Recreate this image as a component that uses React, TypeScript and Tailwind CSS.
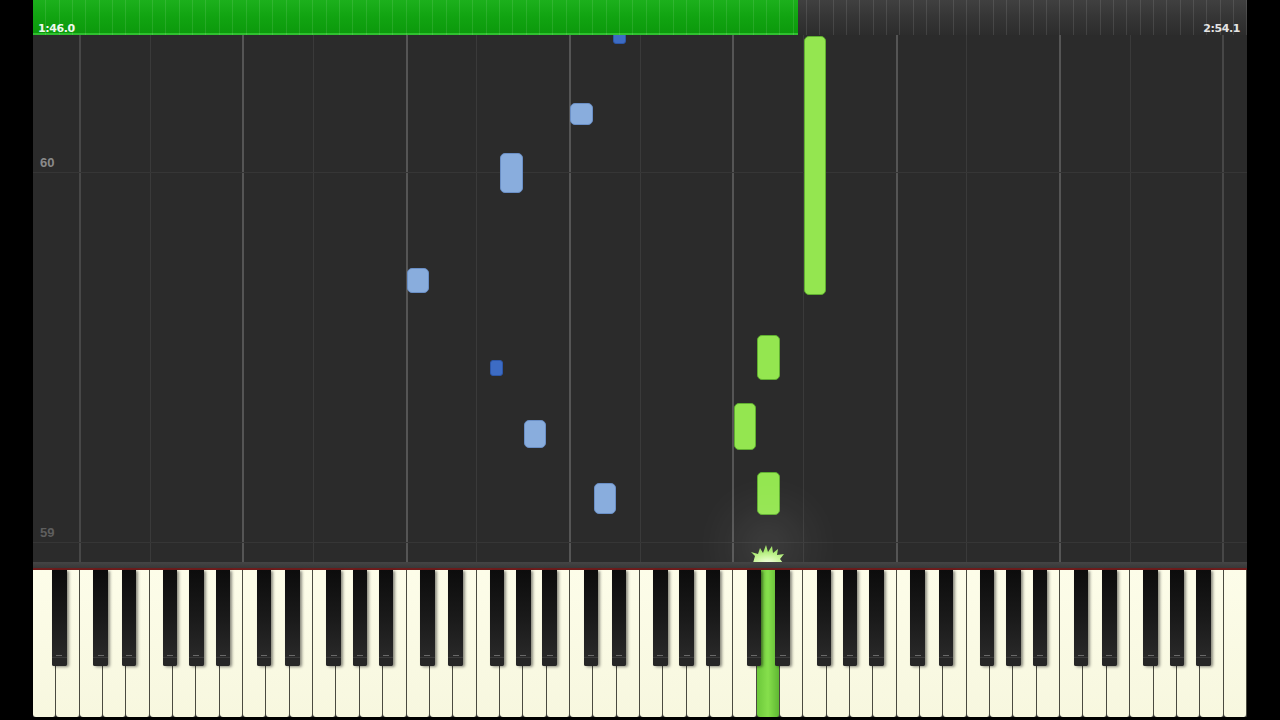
import React from "react";

const W = 1214;
const KW = W / 52;
const LETTERS = "ABCDEFG";
const BLACK_OFFSET: Record<string, number> = { A: 3, C: -2.5, D: 2.5, F: -3, G: 0 };

type Note = { idx: number; top: number; bottom: number; kind: "green" | "blue" };
type BNote = { after: number; top: number; bottom: number };

const notes: Note[] = [
  { idx: 33, top: 36, bottom: 295, kind: "green" },
  { idx: 31, top: 335, bottom: 380, kind: "green" },
  { idx: 30, top: 403, bottom: 450, kind: "green" },
  { idx: 31, top: 472, bottom: 515, kind: "green" },
  { idx: 16, top: 268, bottom: 293, kind: "blue" },
  { idx: 20, top: 153, bottom: 193, kind: "blue" },
  { idx: 23, top: 103, bottom: 125, kind: "blue" },
  { idx: 21, top: 420, bottom: 448, kind: "blue" },
  { idx: 24, top: 483, bottom: 514, kind: "blue" },
];

const blackNotes: BNote[] = [
  { after: 19, top: 360, bottom: 376 },
  { after: 24, top: 30, bottom: 44 },
];

function blackCenter(i: number) {
  const letter = LETTERS[i % 7];
  return (i + 1) * KW + (BLACK_OFFSET[letter] ?? 0);
}

const whiteKeys = Array.from({ length: 52 }, (_, i) => i);
const blackKeys = whiteKeys.filter((i) => i < 51 && LETTERS[i % 7] in BLACK_OFFSET);
const PRESSED = 31;

function columnClass(i: number) {
  const l = LETTERS[i % 7];
  if (l === "C") {
    return i === 2 || i === 51 ? "border-l-2 border-[#474747]" : "border-l-2 border-[#555]";
  }
  if (l === "F") return "border-l border-[#3a3a3a]";
  return "";
}

function ProgressBar() {
  const ticks = Array.from({ length: 91 }, (_, i) => i);
  return (
    <div className="relative h-[35px] w-full overflow-hidden bg-gradient-to-b from-[#404040] via-[#353535] to-[#2c2c2c]">
      <div className="absolute left-0 top-0 h-[35px] w-[765px] border-b-2 border-[#2fc02f] bg-gradient-to-b from-[#1cb01c] via-[#11a411] to-[#0c9a0c]" />
      <div className="absolute inset-0 flex">
        {ticks.map((t) => (
          <div key={t} className="flex-1 border-r border-white/10" />
        ))}
      </div>
      <div className="relative flex h-full items-end justify-between px-[5px] pb-0 text-[11px] font-semibold leading-[13px] text-[#e4e4e4] [font-family:'DejaVu_Sans','Liberation_Sans',sans-serif] tracking-[-0.4px]">
        <span className="text-[#eef8ee]">1:46.0</span>
        <span className="pr-[2px]">2:54.1</span>
      </div>
    </div>
  );
}

function Roll() {
  return (
    <div className="relative h-[527px] w-full overflow-hidden bg-[#2b2b2b]">
      <div className="absolute inset-0 flex">
        {whiteKeys.map((i) => (
          <div key={i} className={`h-full flex-1 ${columnClass(i)}`} />
        ))}
      </div>
      <div className="absolute inset-0 flex flex-col pl-[7px] pt-[118px] text-[13px] font-bold [font-family:'Liberation_Sans',Arial,sans-serif]">
        <div className="h-[19px] text-[#8a8a8a]">60</div>
        <div className="-ml-[7px] h-px bg-[#363636]" />
        <div className="h-[350px]" />
        <div className="h-[19px] text-[#5e5e5e]">59</div>
        <div className="-ml-[7px] h-px bg-[#363636]" />
      </div>

      {notes.map((n, k) => (
        <div
          key={"n" + k}
          className={`absolute rounded-[5px] border ${
            n.kind === "green" ? "border-[#5fae30] bg-[#94e650]" : "border-[#6a8fc6] bg-[#89addd]"
          }`}
          style={{ left: n.idx * KW + 0.5, width: KW - 1, top: n.top - 35, height: n.bottom - n.top }}
        />
      ))}
      {blackNotes.map((n, k) => (
        <div
          key={"b" + k}
          className="absolute rounded-[3px] border border-[#2c56a8] bg-[#3d6cc4]"
          style={{ left: blackCenter(n.after) - 6.5, width: 13, top: n.top - 35, height: n.bottom - n.top }}
        />
      ))}

      <div className="absolute left-[700px] top-[475px] h-[70px] w-[70px] rounded-full bg-white/10 blur-xl" />
      <svg className="absolute left-[715px] top-[506px]" width="40" height="22" viewBox="0 0 40 22">
        <defs>
          <radialGradient id="sg" cx="50%" cy="100%" r="70%">
            <stop offset="0%" stopColor="#f4ffe0" />
            <stop offset="60%" stopColor="#c9f59a" />
            <stop offset="100%" stopColor="#a8e870" />
          </radialGradient>
        </defs>
        <path
          d="M5 22 L7 15 L3 11 L10 13 L12 7 L15 12 L18 4 L20 11 L24 5 L25 12 L30 8 L29 14 L36 13 L32 18 L35 22 Z"
          fill="url(#sg)"
        />
      </svg>
    </div>
  );
}

function Keyboard() {
  return (
    <div className="relative h-[147px] w-full bg-[#2a2a2a]">
      <div className="flex h-full w-full">
        {whiteKeys.map((i) => (
          <div
            key={i}
            className={`h-full flex-1 rounded-b-[3px] border-r border-[#4a4a40] ${
              i === PRESSED
                ? "bg-gradient-to-r from-[#6cc83a] via-[#86df4c] to-[#5fb832]"
                : "bg-gradient-to-b from-[#fdfde9] to-[#f7f7df]"
            }`}
          />
        ))}
      </div>
      {blackKeys.map((i) => (
        <div
          key={"bk" + i}
          className="absolute top-0 flex h-[96px] w-[14.5px] flex-col justify-end rounded-b-[2px] bg-gradient-to-b from-[#0c0c0c] via-[#1a1a1a] to-[#2c2c2c] shadow-[2px_1px_3px_rgba(0,0,0,0.45)]"
          style={{ left: blackCenter(i) - 7.25 }}
        >
          <div className="mx-auto mb-[1px] h-px w-[6px] bg-[#6a6a6a]" />
          <div className="h-[9px] w-full rounded-b-[2px] border-t border-[#3a3a3a] bg-[#262626]" />
        </div>
      ))}
    </div>
  );
}

export default function App() {
  return (
    <div className="flex h-[720px] w-[1280px] justify-center overflow-hidden bg-black">
      <div className="flex w-[1214px] flex-col">
        <ProgressBar />
        <Roll />
        <div className="h-[6px] w-full bg-gradient-to-b from-[#454545] to-[#383838]" />
        <div className="h-[2px] w-full bg-[#6e1c1c]" />
        <Keyboard />
        <div className="h-[3px] w-full bg-black" />
      </div>
    </div>
  );
}
